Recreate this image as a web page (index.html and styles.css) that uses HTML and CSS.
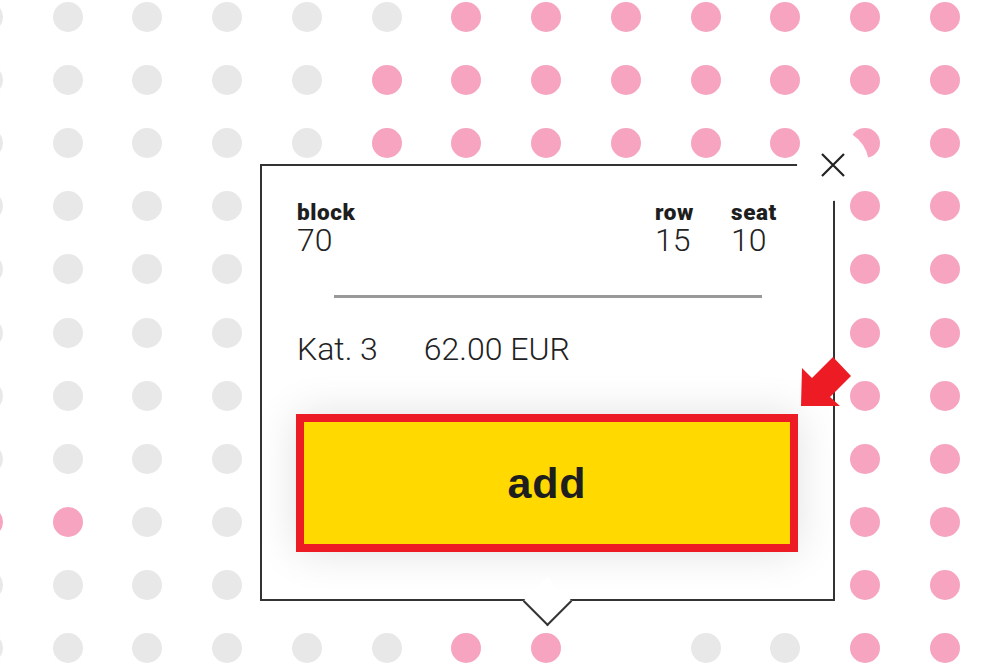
FILE: index.html
```html
<!DOCTYPE html>
<html lang="en">
<head>
    <meta charset="UTF-8">
    <title>Seat selection</title>
    <link rel="stylesheet" href="styles.css">
</head>
<body>
<div class="map" id="map"></div>

<div class="popup">
    <div class="seat-head">
        <div class="col col-block">
            <p class="label">block</p>
            <p class="value">70</p>
        </div>
        <div class="col col-row">
            <p class="label">row</p>
            <p class="value">15</p>
        </div>
        <div class="col col-seat">
            <p class="label">seat</p>
            <p class="value">10</p>
        </div>
    </div>
    <hr class="divider">
    <p class="price"><span class="cat">Kat. 3</span><span>62.00 EUR</span></p>
    <button class="add-btn" type="button">add</button>
    <span class="notch"></span>
</div>

<button class="close" type="button" aria-label="close">
    <svg width="24" height="24" viewBox="0 0 24 24"><path d="M1 1L23 23M23 1L1 23" stroke="#222" stroke-width="2.2" fill="none"/></svg>
</button>

<svg class="hint" width="60" height="60" viewBox="796 352 60 60">
    <polygon points="801,406 802,368 812,378 833,357 851,376 830,397 840,406" fill="#ed1c24"/>
</svg>

<script>
// g = free, p = taken, . = no seat
var rows = [
    'ggggggppppppp',
    'gggggpppppppp',
    'gggggpppppppp',
    'ggggppppppppp',
    'ggggppppppppp',
    'ggggppppppppp',
    'ggggppppppppp',
    'ggggppppppppp',
    'ppggppppppppp',
    'ggggppppppppp',
    'ggggggpp.ggpp'
];
var oMap = document.getElementById('map');
var html = '';
for (var i = 0; i < rows.length; i++) {
    for (var j = 0; j < rows[i].length; j++) {
        var c = rows[i].charAt(j);
        html += c === '.' ? '<span></span>' : '<span class="dot ' + (c === 'p' ? 'taken' : 'free') + '"></span>';
    }
}
oMap.innerHTML = html;
</script>
</body>
</html>
```

FILE: styles.css
```css
html, body {
    margin: 0;
    padding: 0;
}
body {
    width: 1000px;
    height: 670px;
    overflow: hidden;
    position: relative;
    background: #fff;
    font-family: Roboto, "Noto Sans", sans-serif;
    color: #222;
}
p {
    margin: 0;
}

.map {
    display: grid;
    grid-template-columns: repeat(13, 79.75px);
    grid-auto-rows: 63.1px;
    place-items: center;
    margin-left: -52px;
    margin-top: -14.5px;
}
.dot {
    width: 30px;
    height: 30px;
    border-radius: 50%;
}
.dot.free {
    background: #e8e8e8;
}
.dot.taken {
    background: #f6a4bf;
}

.popup {
    position: absolute;
    left: 260px;
    top: 164px;
    width: 575px;
    height: 437px;
    box-sizing: border-box;
    border: 2px solid #333;
    background: #fff;
    padding: 34px 35px 0 34px;
    display: flex;
    flex-direction: column;
}
.seat-head {
    display: flex;
    padding-left: 1px;
}
.col-block {
    flex: 1;
}
.col-row {
    width: 76px;
}
.col-seat {
    width: 67px;
}
.label {
    font-size: 22.5px;
    line-height: 24px;
    font-weight: 900;
    letter-spacing: 0.6px;
    color: #1e1e1e;
}
.value {
    font-size: 32px;
    line-height: 32px;
    font-weight: 300;
    color: #222;
}
.divider {
    width: 428px;
    height: 3px;
    margin: 39px auto 0;
    border: none;
    background: #999;
    position: relative;
    left: 1px;
}
.price {
    margin-top: 34px;
    padding-left: 1px;
    font-size: 32px;
    line-height: 34px;
    font-weight: 300;
    color: #222;
}
.price .cat {
    margin-right: 46px;
}
.add-btn {
    margin-top: 48px;
    height: 138px;
    border: 8px solid #ed1c24;
    background: #ffd900;
    font-family: "Liberation Sans", Arial, sans-serif;
    font-weight: 700;
    font-size: 43px;
    letter-spacing: 0.8px;
    color: #1e1e1e;
    box-shadow: 0 0 40px rgba(0, 0, 0, 0.12);
    cursor: pointer;
}
.notch {
    position: absolute;
    left: 268px;
    bottom: -20px;
    width: 35px;
    height: 35px;
    background: #fff;
    border-right: 2px solid #333;
    border-bottom: 2px solid #333;
    transform: rotate(45deg);
    box-sizing: border-box;
}

.close {
    position: absolute;
    left: 797px;
    top: 129px;
    width: 72px;
    height: 72px;
    border: none;
    border-radius: 50%;
    background: #fff;
    padding: 0;
    display: flex;
    align-items: center;
    justify-content: center;
    cursor: pointer;
}
.hint {
    position: absolute;
    left: 796px;
    top: 352px;
}
```
